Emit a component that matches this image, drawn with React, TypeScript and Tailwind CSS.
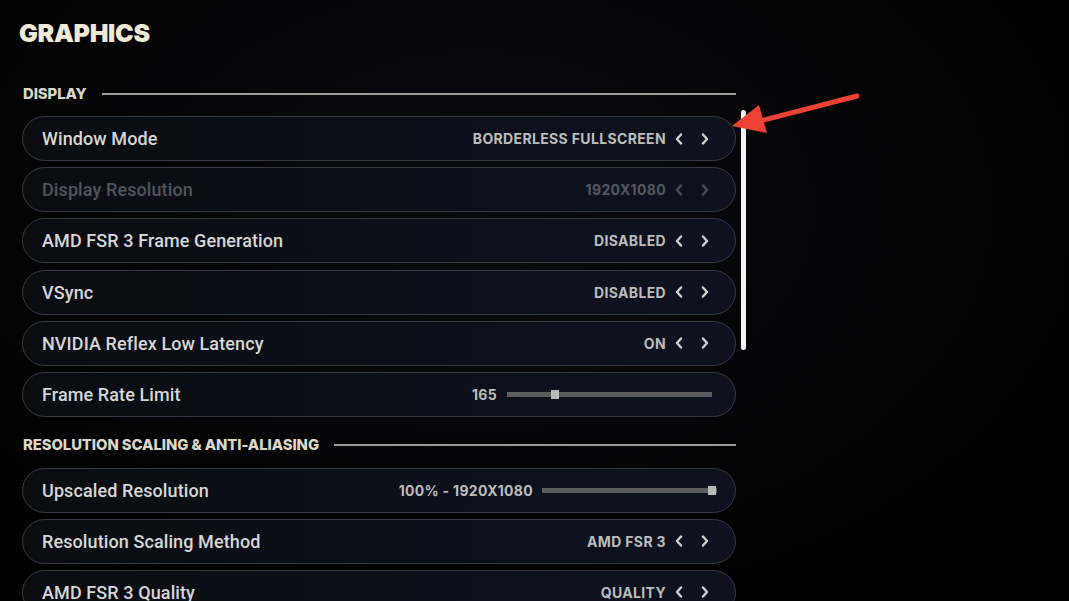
import React from "react";

type Row =
  | { label: string; kind: "select"; value: string; disabled?: boolean }
  | { label: string; kind: "slider"; value: string; trackW: number; thumb: number; gap: number; pr: number };

const display: Row[] = [
  { label: "Window Mode", kind: "select", value: "BORDERLESS FULLSCREEN" },
  { label: "Display Resolution", kind: "select", value: "1920X1080", disabled: true },
  { label: "AMD FSR 3 Frame Generation", kind: "select", value: "DISABLED" },
  { label: "VSync", kind: "select", value: "DISABLED" },
  { label: "NVIDIA Reflex Low Latency", kind: "select", value: "ON" },
  { label: "Frame Rate Limit", kind: "slider", value: "165", trackW: 205, thumb: 44, gap: 10, pr: 23 },
];

const scaling: Row[] = [
  { label: "Upscaled Resolution", kind: "slider", value: "100% - 1920X1080", trackW: 175, thumb: 166, gap: 9, pr: 18 },
  { label: "Resolution Scaling Method", kind: "select", value: "AMD FSR 3" },
  { label: "AMD FSR 3 Quality", kind: "select", value: "QUALITY" },
];

function Chevron({ dir, color }: { dir: "l" | "r"; color: string }) {
  return (
    <svg width="8" height="12" viewBox="0 0 8 12" className="shrink-0">
      <polyline
        points={dir === "l" ? "6,1.5 2,6 6,10.5" : "2,1.5 6,6 2,10.5"}
        fill="none"
        stroke={color}
        strokeWidth="2.4"
        strokeLinecap="round"
        strokeLinejoin="round"
      />
    </svg>
  );
}

function SettingRow({ row }: { row: Row }) {
  const disabled = row.kind === "select" && row.disabled;
  return (
    <div className="h-[45px] shrink-0 rounded-full border-[1.5px] border-[#383b44] bg-[linear-gradient(90deg,#0a0c12_0%,#0d101a_60%,#0e1220_100%)] flex items-center pl-[19px]">
      <span
        className={
          "flex-1 text-[18px] font-medium tracking-[0.1px] " +
          (disabled ? "text-[#51555c]" : "text-[#d7d7d7]")
        }
        style={{ fontFamily: "Roboto, 'Noto Sans', sans-serif" }}
      >
        {row.label}
      </span>
      {row.kind === "select" ? (
        <div className="flex items-center pr-[26px]">
          <span
            className={
              "text-[14px] font-bold tracking-[0.35px] " + (disabled ? "text-[#55585d]" : "text-[#bdbdbd]")
            }
            style={{ fontFamily: "Inter, sans-serif" }}
          >
            {row.value}
          </span>
          <div className="ml-[9px] flex items-center gap-[18px]">
            <Chevron dir="l" color={disabled ? "#4b4e54" : "#d2d2d2"} />
            <Chevron dir="r" color={disabled ? "#4b4e54" : "#d2d2d2"} />
          </div>
        </div>
      ) : (
        <div className="flex items-center" style={{ paddingRight: row.pr }}>
          <span className="text-[14px] font-bold tracking-[0.3px] text-[#bdbdbd]" style={{ fontFamily: "Inter, sans-serif" }}>
            {row.value}
          </span>
          <div
            className="relative h-[5px] bg-[#5c5d61]"
            style={{ width: row.trackW, marginLeft: row.gap }}
          >
            <div
              className="absolute top-[-2px] h-[9px] w-[8px] bg-[#b9b9b9]"
              style={{ left: row.thumb }}
            />
          </div>
        </div>
      )}
    </div>
  );
}

function Header({ text }: { text: string }) {
  return (
    <div className="flex items-center h-[14px]">
      <span
        className="text-[14.8px] font-extrabold leading-none tracking-[-0.05px] text-[#dcd7c8] pl-[1px]"
        style={{ fontFamily: "Inter, sans-serif" }}
      >
        {text}
      </span>
      <div className="ml-[15px] flex-1 h-[2px] bg-[#9b9a96]" />
    </div>
  );
}

export default function App() {
  return (
    <div
      className="relative w-[1069px] h-[601px] overflow-hidden bg-[radial-gradient(ellipse_at_45%_35%,#0a0b10_0%,#050507_45%,#000000_80%)]"
      style={{ fontFamily: "Inter, sans-serif" }}
    >
      <div className="pl-[22px] pt-[19px]">
        <h1 className="ml-[-3px] text-[25px] font-black leading-[28px] tracking-[-0.3px] text-[#efe9d6]">
          GRAPHICS
        </h1>
        <div className="mt-[40px] flex">
          <div className="w-[714px] flex flex-col">
            <Header text="DISPLAY" />
            <div className="mt-[15px] flex flex-col gap-[6.2px]">
              {display.map((r) => (
                <SettingRow key={r.label} row={r} />
              ))}
            </div>
            <div className="mt-[21px]">
              <Header text="RESOLUTION SCALING & ANTI-ALIASING" />
            </div>
            <div className="mt-[16px] flex flex-col gap-[6px]">
              {scaling.map((r) => (
                <SettingRow key={r.label} row={r} />
              ))}
            </div>
          </div>
          <div className="ml-[5px] pt-[23px]">
            <div className="w-[5px] h-[240px] rounded-full bg-[#f4f4f4]" />
          </div>
        </div>
      </div>
      <svg className="pointer-events-none absolute inset-0" width="1069" height="601" viewBox="0 0 1069 601">
        <line x1="857" y1="96" x2="760" y2="121" stroke="#ee4236" strokeWidth="5" strokeLinecap="round" />
        <polygon points="732,126 759,105 767,133" fill="#ee4236" />
      </svg>
    </div>
  );
}
